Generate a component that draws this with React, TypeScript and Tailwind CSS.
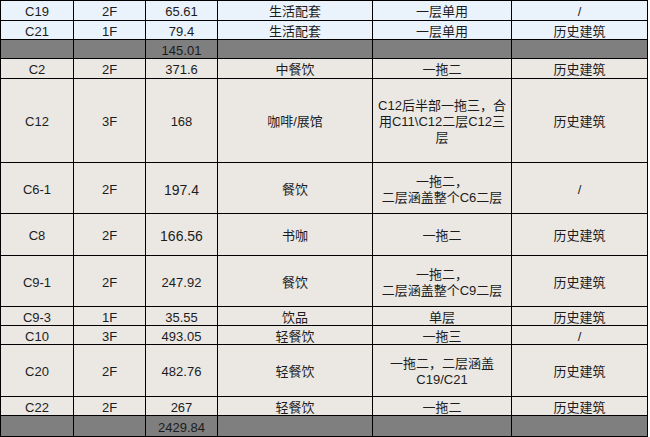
import React from 'react';

type Row = {
    tone: 'blue' | 'beige' | 'gray';
    cells: (string | string[])[];
    big?: boolean;
};

const rows: Row[] = [
    { tone: 'blue', cells: ['C19', '2F', '65.61', '生活配套', '一层单用', '/'] },
    { tone: 'blue', cells: ['C21', '1F', '79.4', '生活配套', '一层单用', '历史建筑'] },
    { tone: 'gray', cells: ['', '', '145.01', '', '', ''] },
    { tone: 'beige', cells: ['C2', '2F', '371.6', '中餐饮', '一拖二', '历史建筑'] },
    {
        tone: 'beige',
        cells: ['C12', '3F', '168', '咖啡/展馆', ['C12后半部一拖三，合', '用C11\\C12二层C12三', '层'], '历史建筑'],
    },
    { tone: 'beige', big: true, cells: ['C6-1', '2F', '197.4', '餐饮', ['一拖二，', '二层涵盖整个C6二层'], '/'] },
    { tone: 'beige', big: true, cells: ['C8', '2F', '166.56', '书咖', '一拖二', '历史建筑'] },
    { tone: 'beige', cells: ['C9-1', '2F', '247.92', '餐饮', ['一拖二，', '二层涵盖整个C9二层'], '历史建筑'] },
    { tone: 'beige', cells: ['C9-3', '1F', '35.55', '饮品', '单层', '历史建筑'] },
    { tone: 'beige', cells: ['C10', '3F', '493.05', '轻餐饮', '一拖三', '/'] },
    { tone: 'beige', cells: ['C20', '2F', '482.76', '轻餐饮', ['一拖二，二层涵盖', 'C19/C21'], '历史建筑'] },
    { tone: 'beige', cells: ['C22', '2F', '267', '轻餐饮', '一拖二', '历史建筑'] },
    { tone: 'gray', cells: ['', '', '2429.84', '', '', ''] },
];

const toneClass = {
    blue: 'bg-[#eaf2fb]',
    beige: 'bg-[#ebe8e4]',
    gray: 'bg-[#7f7f7f]',
};

const App: React.FC = () => {
    return (
        <div className="w-[650px] h-[437px] bg-white">
            <div
                className="grid w-[648px] grid-cols-[73px_72px_72px_155px_139px_136px] grid-rows-[20px_19px_19px_20px_84px_51px_42px_51px_19px_19px_52px_19px_21px] border-l border-t border-black text-[13px] leading-[16px] text-[#1c1c1c]"
                style={{ fontFamily: '"Liberation Sans", "Noto Sans CJK SC", sans-serif' }}
            >
                {rows.map((row, r) =>
                    row.cells.map((cell, c) => (
                        <div
                            key={`${r}-${c}`}
                            className={`flex items-center justify-center border-r border-b border-black pt-[3px] text-center ${toneClass[row.tone]}`}
                        >
                            {Array.isArray(cell) ? (
                                <div>
                                    {cell.map((line, i) => (
                                        <div key={i}>{line}</div>
                                    ))}
                                </div>
                            ) : (
                                <span className={row.big && c === 2 ? 'text-[14px]' : ''}>{cell}</span>
                            )}
                        </div>
                    ))
                )}
            </div>
        </div>
    );
};

export default App;
